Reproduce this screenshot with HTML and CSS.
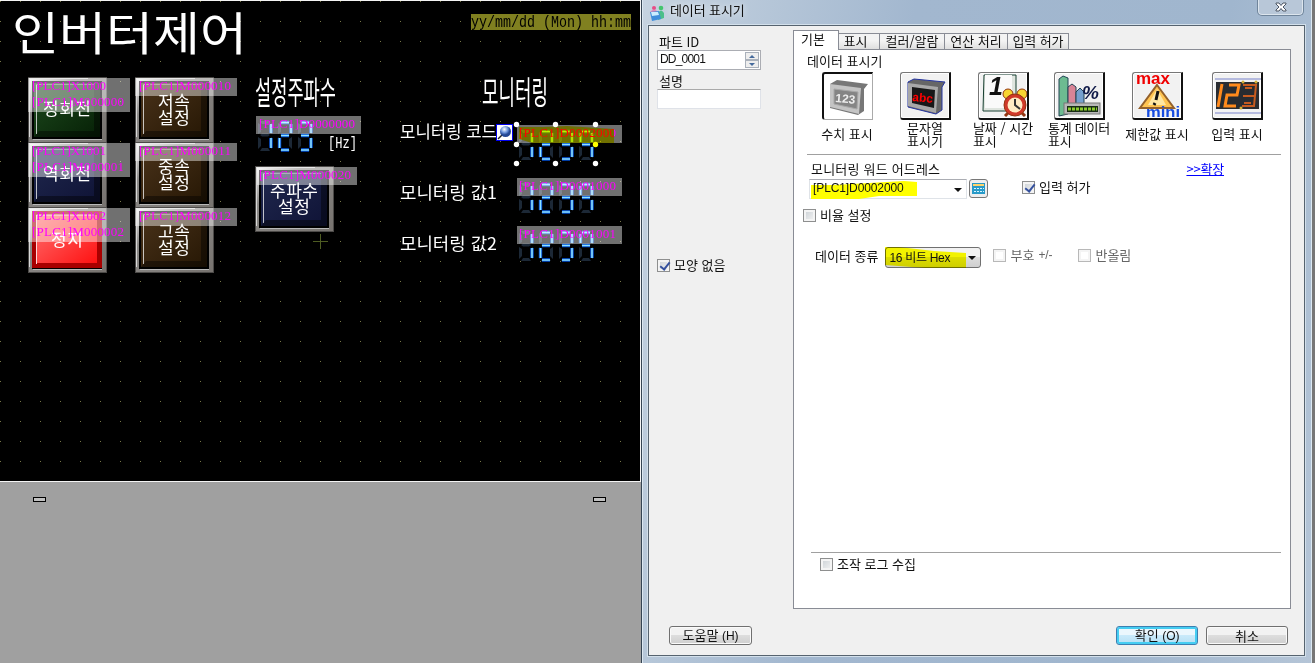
FILE: index.html
```html
<!DOCTYPE html>
<html lang="ko">
<head>
<meta charset="utf-8">
<title>데이터 표시기</title>
<link rel="stylesheet" href="styles.css">
</head>
<body>
<main class="app">
<section class="editor">
<svg class="canvas" width="641" height="482" viewBox="0 0 641 482">
  <defs>
    <pattern id="dots" x="20" y="21" width="20" height="20" patternUnits="userSpaceOnUse"><rect width="1" height="1" fill="#77774a"/></pattern>
    <linearGradient id="frame" x1="0" y1="0" x2="1" y2="1"><stop offset="0" stop-color="#f4f4f4"/><stop offset=".3" stop-color="#8c8a88"/><stop offset="1" stop-color="#77736f"/></linearGradient>
    <linearGradient id="green" x1="0" y1="0" x2="1" y2="1"><stop offset="0" stop-color="#1d4a1d"/><stop offset="1" stop-color="#062006"/></linearGradient>
    <linearGradient id="navy" x1="0" y1="0" x2="1" y2="1"><stop offset="0" stop-color="#20284e"/><stop offset="1" stop-color="#0f1336"/></linearGradient>
    <linearGradient id="red" x1="0" y1="0" x2="1" y2="1"><stop offset="0" stop-color="#ff7070"/><stop offset="1" stop-color="#ff1212"/></linearGradient>
    <linearGradient id="brown" x1="0" y1="0" x2="1" y2="1"><stop offset="0" stop-color="#49321a"/><stop offset="1" stop-color="#261704"/></linearGradient>
    <g id="bezel">
      <rect width="79" height="66" fill="#4c4a48"/>
      <rect x="1" y="1" width="77" height="64" fill="url(#frame)"/>
      <path d="M1.500 60V1.500H60" fill="none" stroke="#d8d8d8"/>
      <rect x="4" y="4" width="70" height="58" fill="#000"/>
      <path d="M5 62.500H74" fill="none" stroke="#b8b8b8"/>
    </g>
    <g id="gloss">
      <path d="M8.500 57V8" stroke="#eee" opacity=".8"/><path d="M8 7.500H66" stroke="#bbb" opacity=".5"/>
      <path d="M66 8L72 5V60H6L11 54H66Z" fill="#000" opacity=".42"/>
    </g>
    <g id="off" fill="#1c2836">
      <path d="M3 0H13L11 3H5ZM3 14L5 12.500H11L13 14L11 15.500H5ZM3 30H13L11 27H5ZM1 2L4 4V11L1 13ZM15 2L12 4V11L15 13ZM1 16L4 18V25L1 28ZM15 16L12 18V25L15 28Z"/>
    </g>
    <g id="d1"><path d="M14 3V12M14 17V27"/></g>
    <g id="d2"><path d="M4 1.500H12M14 3V12M4 14.500H12M2.500 17V27M4 29H12"/></g>
    <g id="d3"><path d="M4 1.500H12M14 3V12M4 14.500H12M14 17V27M4 29H12"/></g>
    <g id="d4"><path d="M4 1.500H12M2.500 3V12M14 3V12M4 14.500H12M14 17V27"/></g>
    <g id="o123"><use href="#off"/><use href="#off" x="20"/><use href="#off" x="40"/></g>
    <g id="l123"><use href="#d1"/><use href="#d2" x="20"/><use href="#d3" x="40"/></g>
    <g id="n123"><use href="#o123"/><use href="#l123" stroke="#0050d8" stroke-width="3.400"/><use href="#l123" stroke="#8fe2ff" stroke-width="1.600"/></g>
    <g id="n1234"><use href="#n123"/><use href="#off" x="60"/><use href="#d4" x="60" stroke="#0050d8" stroke-width="3.400"/><use href="#d4" x="60" stroke="#8fe2ff" stroke-width="1.600"/></g>
    <radialGradient id="ball" cx=".4" cy=".3"><stop offset="0" stop-color="#fff"/><stop offset=".6" stop-color="#7098df"/><stop offset="1" stop-color="#244794"/></radialGradient>
  </defs>
  <rect width="641" height="482" fill="#000"/>
  <rect width="640" height="481" fill="url(#dots)"/>
  <path d="M0 .5H641M640.500 0V482M0 481.500H641" stroke="#f4f4f4"/>

  <g class="pix">
    <text x="12" y="50" font-size="46" textLength="235" lengthAdjust="spacingAndGlyphs">인버터제어</text>
    <text x="255" y="104" font-size="32" textLength="81" lengthAdjust="spacingAndGlyphs">설정주파수</text>
    <text x="482" y="104" font-size="32" textLength="66" lengthAdjust="spacingAndGlyphs">모니터링</text>
    <text x="400" y="138" font-size="17" textLength="97" lengthAdjust="spacingAndGlyphs">모니터링 코드</text>
    <text x="400" y="199" font-size="17" textLength="97" lengthAdjust="spacingAndGlyphs">모니터링 값1</text>
    <text x="400" y="250" font-size="17" textLength="97" lengthAdjust="spacingAndGlyphs">모니터링 값2</text>
    <text class="mono" x="328" y="148" font-size="17" textLength="29" lengthAdjust="spacingAndGlyphs">[Hz]</text>
  </g>
  <rect x="471" y="14" width="160" height="16" fill="#808020"/>
  <text class="mono" x="471" y="27" font-size="17" textLength="160" lengthAdjust="spacingAndGlyphs">yy/mm/dd (Mon) hh:mm</text>

  <g fill="none">
    <g transform="translate(28 77)"><use href="#bezel"/><rect x="6" y="6" width="66" height="54" fill="url(#green)"/><use href="#gloss"/></g>
    <g transform="translate(28 142)"><use href="#bezel"/><rect x="6" y="6" width="66" height="54" fill="url(#navy)"/><use href="#gloss"/></g>
    <g transform="translate(28 207)"><use href="#bezel"/><rect x="4" y="4" width="70" height="57" fill="#a80000"/><rect x="9" y="8" width="60" height="48" fill="url(#red)"/><path d="M8.500 57V8H66" stroke="#ffd8d8"/></g>
    <g transform="translate(135 77)"><use href="#bezel"/><rect x="6" y="6" width="66" height="54" fill="url(#brown)"/><use href="#gloss"/></g>
    <g transform="translate(135 142)"><use href="#bezel"/><rect x="6" y="6" width="66" height="54" fill="url(#brown)"/><use href="#gloss"/></g>
    <g transform="translate(135 207)"><use href="#bezel"/><rect x="6" y="6" width="66" height="54" fill="url(#brown)"/><use href="#gloss"/></g>
    <g transform="translate(255 166)"><use href="#bezel"/><rect x="6" y="6" width="66" height="54" fill="url(#navy)"/><use href="#gloss"/></g>
    <use href="#n123" x="257" y="121"/>
    <use href="#n1234" x="518" y="130"/>
    <use href="#n1234" x="518" y="183"/>
    <use href="#n1234" x="518" y="231"/>
  </g>

  <g fill="#fff" fill-opacity=".44">
    <path d="M28 78h102v34H28ZM28 143h102v34H28ZM28 208h102v34H28ZM135 78h102v18H135ZM135 143h102v18H135ZM135 208h102v18H135ZM256 116h105v18H256ZM257 167h100v18H257ZM517 125h105v18H517ZM517 178h105v18H517ZM517 226h105v18H517Z"/>
  </g>
  <g class="pix" font-size="17" text-anchor="middle">
    <text x="67" y="115" textLength="48">정회전</text><text x="67" y="180" textLength="48">역회전</text><text x="67" y="246" textLength="32">정지</text>
    <text x="174" y="108" textLength="32">저속</text><text x="174" y="124" textLength="32">설정</text>
    <text x="174" y="173" textLength="32">중속</text><text x="174" y="189" textLength="32">설정</text>
    <text x="174" y="238" textLength="32">고속</text><text x="174" y="254" textLength="32">설정</text>
    <text x="294" y="197" textLength="48">주파수</text><text x="294" y="213" textLength="32">설정</text>
  </g>
  <g class="addr">
    <text x="32" y="90" textLength="74">[PLC1]X1000</text><text x="32" y="106" textLength="92">[PLC1]M000000</text>
    <text x="32" y="155" textLength="74">[PLC1]X1001</text><text x="32" y="171" textLength="92">[PLC1]M000001</text>
    <text x="32" y="220" textLength="74">[PLC1]X1002</text><text x="32" y="236" textLength="92">[PLC1]M000002</text>
    <text x="139" y="90" textLength="92">[PLC1]M000010</text><text x="139" y="155" textLength="92">[PLC1]M000011</text><text x="139" y="220" textLength="92">[PLC1]M000012</text>
    <text x="259" y="128" textLength="96">[PLC1]D0000000</text><text x="259" y="179" textLength="92">[PLC1]M000020</text>
    <text x="519" y="137" textLength="97">[PLC1]D0002000</text><text x="519" y="190" textLength="97">[PLC1]D0001000</text><text x="519" y="238" textLength="97">[PLC1]D0001001</text>
  </g>
  <path class="marker" d="M519 127H543L567 126 614 129V143H532L519 139Z"/>
  <g fill="#fff"><circle cx="516.500" cy="124.500" r="2.700"/><circle cx="555.500" cy="124.500" r="2.700"/><circle cx="595.500" cy="124.500" r="2.700"/><circle cx="516.500" cy="144.500" r="2.700"/><circle cx="595.500" cy="144.500" r="2.700" fill="#ff0"/><circle cx="516.500" cy="163.500" r="2.700"/><circle cx="555.500" cy="163.500" r="2.700"/><circle cx="595.500" cy="163.500" r="2.700"/></g>
  <rect x="496.500" y="124.500" width="16" height="16" fill="#fff" stroke="#0000f0"/><path d="M498 139L502 135" stroke="#222" stroke-width="1.500"/><circle cx="505.500" cy="131.500" r="5.500" fill="url(#ball)"/>
  <path d="M320.500 234V249M313 241.500H328" stroke="#4e5c22"/>
</svg>
<div class="handles"><i></i><i></i></div>
</section>

<section class="dialog">
  <header class="titlebar">
    <svg width="16" height="16" viewBox="0 0 16 16"><circle cx="5" cy="3" r="2" fill="#e84c84"/><circle cx="12" cy="3" r="2.300" fill="#43c56e"/><path d="M9 15V8Q12 3 15 8V13Z" fill="#4cbf8a"/><path d="M1 7Q5 2 9 7Z" fill="#e18ab8"/><path d="M1 7L10 6L12 14L3 16Z" fill="#3f8edb"/><path d="M2 7L9 7L10 10L3 11Z" fill="#c9edff"/></svg>
    <span>데이터 표시기</span>
    <button class="close"><svg width="12" height="10" viewBox="0 0 12 10"><path d="M1 1H4L6 3.500 8 1H11V2L8 5 11 8V9H8L6 6.500 4 9H1V8L4 5 1 2Z" fill="#fff" stroke="#4d5665"/></svg></button>
  </header>
  <div class="client">
    <div class="body">
      <aside class="side">
        <label>파트 ID</label>
        <div class="field"><span class="lat">DD_0001</span><span class="spin"><i class="up"></i><i class="down"></i></span></div>
        <label class="second">설명</label>
        <div class="field empty"></div>
        <div class="check shape"><i class="box on"></i>모양 없음</div>
      </aside>
      <div class="tabs">
        <nav><span class="active">기본</span><span class="t1">표시</span><span class="t2">컬러/알람</span><span class="t3">연산 처리</span><span class="t4">입력 허가</span></nav>
        <div class="page">
          <div class="heading">데이터 표시기</div>
          <div class="kinds">
            <div class="kind"><span class="tile pressed"><svg width="48" height="44" viewBox="0 0 48 44"><path d="M5 9L12 5 43 9 39 14V36L33 40 5 33Z" fill="#777"/><path d="M5 9L36 13 34 39 5 32Z" fill="#c4c4c4"/><path d="M9 14L33 17 32 34 9 29Z" fill="#858585" stroke="#a8a8a8"/><text class="ic" x="10" y="27" font-size="12" fill="#eee" transform="rotate(5 10 27)">123</text></svg></span><p>수치 표시</p></div>
            <div class="kind"><span class="tile"><svg width="48" height="44" viewBox="0 0 48 44"><path d="M6 8L12 5 43 8 40 13V36L34 40 6 33Z" fill="#666" stroke="#2434a0"/><path d="M6 9L36 13 34 39 6 32Z" fill="#a8a8a8"/><path d="M10 13L33 16 32 34 10 29Z" fill="#181818"/><text class="ic" x="10" y="27" font-size="12" fill="#f00" transform="rotate(5 10 27)">abc</text></svg></span><p>문자열<br>표시기</p></div>
            <div class="kind"><span class="tile"><svg width="48" height="44" viewBox="0 0 48 44"><path d="M4 1H36V33L30 37H3Z" fill="#dfe5df" stroke="#173f30"/><path d="M5 1H32V30L27 34H5Z" fill="#fafafa"/><text class="ic" x="9" y="21" font-size="25" font-style="italic" fill="#111">1</text><g stroke="#923511"><circle cx="28" cy="20" r="5" fill="#f8d532"/><circle cx="42" cy="20" r="5" fill="#f8d532"/><path d="M28 39L25 42M42 39L45 42" stroke-width="3"/><circle cx="35" cy="31" r="11" fill="#cf3929"/></g><circle cx="35" cy="31" r="7.500" fill="#ffebc3"/><path d="M35 25V31L40 35" fill="none" stroke="#333" stroke-width="2"/></svg></span><p class="left">날짜 / 시간<br>표시</p></div>
            <div class="kind shift"><span class="tile"><svg width="48" height="44" viewBox="0 0 48 44"><g stroke="#245"><path d="M3 5L7 2 12 4V40L3 42Z" fill="#6dbb91"/><path d="M12 13L16 10 20 13V36H12Z" fill="#d98496"/><path d="M20 18L24 14 28 18V36H20Z" fill="#75a0ce"/></g><text class="ic" x="26" y="25" font-size="19" font-style="italic" fill="#101a48">%</text><rect x="8" y="29" width="36" height="11" fill="#b8b8b8" stroke="#777"/><rect x="11" y="32" width="31" height="6" fill="#182c15"/><path d="M12 35H41" stroke="#8ccc2f" stroke-width="3" stroke-dasharray="3 1"/></svg></span><p class="left wide">통계 데이터<br>표시</p></div>
            <div class="kind shift"><span class="tile"><svg width="48" height="44" viewBox="0 0 48 44"><text class="ic" x="2" y="10" font-size="16" fill="#f00000" textLength="34" lengthAdjust="spacingAndGlyphs">max</text><path d="M23 11L40 34H6Z" fill="#ffc451" stroke="#94612c" stroke-width="2"/><path d="M23 15L32 31H14Z" fill="#ffe7a4"/><path d="M24 17L22 26M21 29L20 31" stroke="#111" stroke-width="3"/><text class="ic" x="12" y="43" font-size="14" fill="#164ce0" textLength="34" lengthAdjust="spacingAndGlyphs">mini</text></svg></span><p>제한값 표시</p></div>
            <div class="kind"><span class="tile"><svg width="48" height="44" viewBox="0 0 48 44"><path d="M1 5H47M1 39H47" stroke="#7882ca"/><path d="M2 8H45V35H2Z" fill="#292c31"/><g fill="none" stroke="#ff8a1c" stroke-width="3"><path d="M8 10L4 33M15 11H25L23 21H13L11 32H22"/></g><path d="M29 11H42L40 32H28M29 22H40M31 14H38M30 29H37" fill="none" stroke="#c65b20" stroke-width="2"/><circle cx="29" cy="8" r="1.500" fill="#d5b238"/><circle cx="42" cy="8" r="1.500" fill="#d5b238"/><circle cx="27" cy="34" r="1.500" fill="#d5b238"/></svg></span><p>입력 표시</p></div>
          </div>
          <hr>
          <div class="addresshead"><span>모니터링 워드 어드레스</span><a>&gt;&gt;확장</a></div>
          <div class="addressrow">
            <div class="combo addresscombo"><svg class="hl" width="109" height="20"><path d="M2 5H25L95 1 108 2V16H70L50 19H2Z"/></svg><span class="lat">[PLC1]D0002000</span><i class="arrow"></i></div>
            <button class="calc"><svg width="13" height="11" viewBox="0 0 13 11"><rect width="13" height="11" fill="#289ac8"/><path d="M1 1H12V3H1Z" fill="#ffd36b"/><path d="M2 5.500H12M2 8.500H12" stroke="#d8f5ff" stroke-dasharray="2 1"/></svg></button>
            <div class="check permit"><i class="box on"></i>입력 허가</div>
          </div>
          <div class="check ratio"><i class="box"></i>비율 설정</div>
          <div class="typerow"><span class="typelabel">데이터 종류</span><div class="combo type"><svg class="hl" width="84" height="21"><path d="M0 0H14L49 4 81 6V21H40L0 18Z"/></svg><span class="lat">16 비트 Hex</span><i class="arrow"></i></div><div class="check dim sign"><i class="box"></i>부호 <span class="lat">+/-</span></div><div class="check dim"><i class="box"></i>반올림</div></div>
          <div class="log"><div class="check"><i class="box"></i>조작 로그 수집</div></div>
        </div>
      </div>
    </div>
    <footer><button class="help">도움말 <span class="lat">(H)</span></button><span class="push"></span><button class="ok">확인 <span class="lat">(O)</span></button><button>취소</button></footer>
  </div>
</section>
</main>
</body>
</html>
```
FILE: styles.css
```css
*{box-sizing:border-box}
body{margin:0;overflow:hidden;font:13px/14px "Noto Sans CJK KR",sans-serif;color:#111}
button{font:inherit;padding:0;color:inherit}
i{display:block;font-style:normal}
.app{display:flex;width:1315px;height:663px}
.editor{width:641px;background:#a0a0a0}
.canvas{display:block}
.pix{fill:#fff;font-family:"Noto Sans CJK KR",sans-serif;font-weight:400}
.mono{font-family:"Liberation Mono",monospace}
.addr{fill:#f0f;font:13px "Liberation Serif",serif}
.marker{fill:#ff0;mix-blend-mode:multiply}
.handles{display:flex;justify-content:space-between;padding:15px 35px 0 33px}
.handles i{width:13px;height:5px;border:1px solid #000;background:#c0c0c0}

.dialog{width:674px;display:flex;flex-direction:column;background:linear-gradient(100deg,#c6d3e0,#a2b7cf 35%,#a0b6ce 75%,#b5c5d7);border-left:1px solid #354453;border-right:3px solid #777;padding:0 7px 7px 6px;box-shadow:inset 1px 0 #dce8f1,inset -1px 0 #dce8f1}
.titlebar{display:flex;align-items:center;height:25px;flex:none;padding:0 1px}
.titlebar svg{flex:none}
.titlebar>span{margin-left:5px;width:590px;line-height:18px;height:23px;letter-spacing:-.1px;text-shadow:0 0 6px #fff}
.close{width:47px;height:17px;align-self:flex-start;flex:none;margin-top:-1px;margin-left:auto;border:1px solid #70859b;border-top:0;border-radius:0 0 5px 5px;background:#b8c7d8;box-shadow:inset 0 0 0 1px #dce5ed;display:grid;place-items:center}
.client{flex:1;background:#f0f0f0;border:1px solid #56636f;box-shadow:0 0 0 1px #d3e0eb;padding-top:4px}
.body{display:flex;height:579px}
.side{width:144px;padding:6px 0 0 8px}
.side label{display:block;height:14px;line-height:12px;margin-left:2px}
.side .second{margin-top:5px}
.field{display:flex;justify-content:space-between;width:104px;height:20px;border:1px solid #abadb3;background:#fff;padding:1px 1px 1px 2px}
.field.empty{border-color:#dfe2e8;border-top-color:#aaa}
.lat{font-family:"Liberation Sans","Noto Sans CJK KR",sans-serif;font-size:12px;letter-spacing:-.1px}
.field .lat{letter-spacing:-.8px}
.spin{width:14px;display:grid;gap:0}
.spin i{border:1px solid #aab1bb;background:#eee;display:grid;place-items:center}
.up:before,.down:before,.arrow:before{content:"";border:3px solid transparent}
.up:before{border-bottom-color:#456a9c;border-top:0}
.down:before{border-top-color:#456a9c;border-bottom:0}
.shape{margin-top:150px}
.check{display:flex;align-items:flex-start;gap:4px;height:14px;line-height:12px;white-space:nowrap}
.box{width:13px;height:13px;flex:none;border:1px solid #8e8f8f;background:linear-gradient(135deg,#c9cfd4,#f5f5f5);box-shadow:inset 0 0 0 2px #f4f4f4}
.box.on:after{content:"";display:block;width:4px;height:8px;margin:0 0 0 4px;border:solid #35519e;border-width:0 2px 2px 0;transform:rotate(38deg)}
.tabs{width:498px;display:flex;flex-direction:column}
nav{display:flex;align-items:flex-end;height:20px;flex:none;margin-bottom:-1px;z-index:1}
nav span{height:17px;border:1px solid #898c95;border-left:0;background:linear-gradient(#f3f3f3 45%,#dedede);line-height:14px;text-align:center;white-space:nowrap}
nav .active{width:46px;height:20px;padding-right:6px;border-left:1px solid #898c95;border-bottom:0;background:#fff;line-height:16px}
.t1{width:41px;padding-right:7px}.t2{width:65px}.t3{width:63px}.t4{width:61px;letter-spacing:-.1px}
.page{flex:1;border:1px solid #898c95;background:#fff;padding:4px 9px 0}
.heading{margin-left:4px}
.kinds{display:grid;grid-template-columns:repeat(6,78px);margin-left:5px;margin-top:4px;height:82px}
.kind{display:flex;flex-direction:column;align-items:center}
.shift{margin:0 2px 0 -2px}
.tile{width:51px;height:48px;border:1px solid #777;border-right:2px solid #111;border-bottom:2px solid #111;border-radius:3px 0 0 3px;background:#f2f2f2;padding:1px;box-shadow:inset 0 0 0 1px #fff;flex:none;overflow:hidden}
.tile.pressed{border:1px solid #aaa;border-top:2px solid #111;border-left:2px solid #111;background:#fff}
.tile svg{display:block}
.ic{font-family:"Liberation Sans",sans-serif;font-weight:bold}
.kind p{margin:0;height:27px;line-height:13px;text-align:center;white-space:nowrap;display:flex;align-items:center}
.kind p.left{text-align:left}
.kind p.wide{letter-spacing:-.2px}
hr{height:1px;border:0;background:#a0a0a0;margin:0 0 0 4px}
.addresshead{display:flex;justify-content:space-between;margin:7px 57px 0 8px;letter-spacing:.2px}
.addresshead a{color:#00f;text-decoration:underline;letter-spacing:-.2px}
.addressrow{display:flex;margin:3px 0 0 6px;height:20px}
.combo{position:relative;display:flex;align-items:center;justify-content:space-between;background:#fff;border:1px solid #dfe3e8;border-top-color:#abadb3}
.addresscombo{width:158px;padding:0 5px 3px 3px}
.hl{position:absolute;left:-1px;top:0;fill:#ff0}
.combo .lat{position:relative}
.arrow:before{display:block;border:4px solid transparent;border-top-color:#111;border-bottom:0}
.addresscombo .arrow{margin-top:4px;margin-right:-1px}
.calc{width:19px;height:19px;margin-left:2px;border:1px solid #777;border-radius:3px;background:#eee;display:grid;place-items:center}
.permit{margin:2px 0 0 34px}
.ratio{margin-top:10px}
.typerow{display:flex;align-items:center;margin:24px 0 0 12px;height:21px}
.typelabel{padding-bottom:3px}
.type{width:96px;height:21px;margin-left:7px;padding:0 4px 0 3px;border:1px solid #707070;border-radius:3px;background:linear-gradient(#f2f2f2 48%,#ddd 50%,#cfcfcf)}
.type .hl{top:-1px;mix-blend-mode:multiply}
.type .lat{letter-spacing:-.3px}
.sign{margin:0 26px 0 12px}
.dim{color:#666}
.typerow>.check{margin-top:-3px}
.dim .box{background:#fff;border-color:#b8b8b8}
.log{margin:284px 0 0 8px;border-top:1px solid #a0a0a0;padding:5px 9px}
footer{display:flex;gap:8px;padding:17px 16px 0 20px}
footer button{width:82px;height:19px;border:1px solid #707070;border-radius:3px;background:linear-gradient(#f2f2f2 48%,#ddd 50%,#cfcfcf);box-shadow:inset 0 0 0 1px #fafafa;line-height:15px}
footer .help{width:83px}
footer .ok{border-color:#3c7fb1;background:linear-gradient(#ebf7fd 48%,#c9eafa 50%,#b7e0f4);box-shadow:inset 0 0 0 2px #45cdf2}
.push{flex:1}
```
